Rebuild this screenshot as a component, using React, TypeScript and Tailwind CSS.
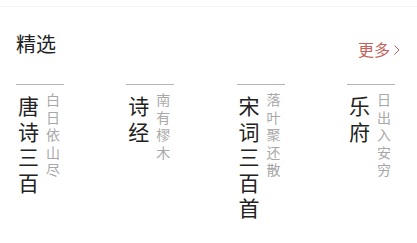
const items = [
  { title: "唐诗三百", sub: "白日依山尽" },
  { title: "诗经", sub: "南有樛木" },
  { title: "宋词三百首", sub: "落叶聚还散" },
  { title: "乐府", sub: "日出入安穷" },
];

const App = () => {
  return (
    <div
      className="w-[417px] h-[243px] bg-white overflow-hidden"
      style={{ fontFamily: '"Noto Sans CJK SC", "Noto Sans", sans-serif' }}
    >
      <div className="h-[7px] border-b border-[#f4f4f4]" />

      {/* 标题栏 */}
      <div className="flex justify-between items-start px-4 h-[77px]">
        <h2 className="mt-[27px] text-[20px] leading-[20px] text-[#222] font-normal">
          精选
        </h2>
        <a className="mt-[34px] flex items-center text-[16px] leading-[16px] text-[#c4605a]">
          更多
          <svg width="8" height="12" viewBox="0 0 8 12" className="ml-[3px] mt-[1px]">
            <polyline
              points="1.5,1.5 6,6 1.5,10.5"
              fill="none"
              stroke="#c4605a"
              strokeWidth="1"
            />
          </svg>
        </a>
      </div>

      {/* 列表 */}
      <div className="flex pl-4 gap-[62.3px]">
        {items.map((item) => (
          <div key={item.title} className="w-12">
            <div className="h-px bg-[#b5b5b5]" />
            <div className="flex items-start">
              <div className="ml-[2px] mt-[8px] w-[21px] text-[21px] leading-[25.5px] text-[#222]">
                {item.title}
              </div>
              <div className="ml-[7px] mt-[6px] w-[14px] text-[14px] leading-[17.5px] text-[#a8a8a8]">
                {item.sub}
              </div>
            </div>
          </div>
        ))}
      </div>
    </div>
  );
};

export default App;
